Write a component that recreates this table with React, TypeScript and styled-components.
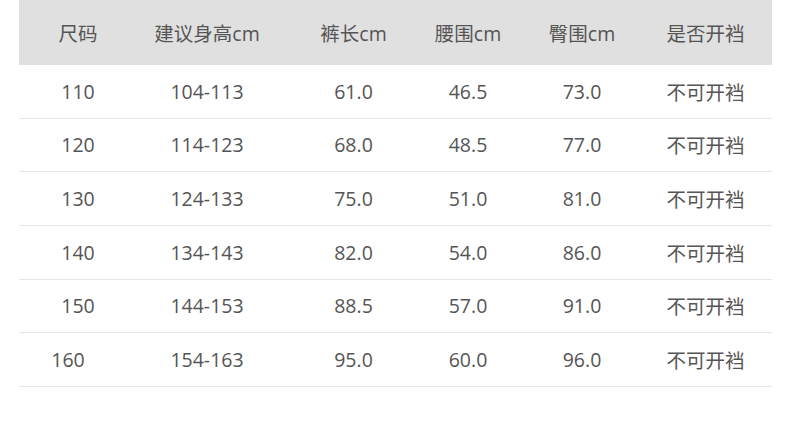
import React from "react";
import styled, { createGlobalStyle } from "styled-components";

const Global = createGlobalStyle`
  html, body { margin: 0; padding: 0; background: #ffffff; }
  body { font-family: "Open Sans", "Noto Sans CJK SC", sans-serif; }
`;

const Page = styled.div`
  width: 790px;
  height: 431px;
  padding: 0 18px 0 19px;
  box-sizing: border-box;
  background: #fff;
`;

const Grid = styled.div`
  display: grid;
  grid-template-columns: 118px 140px 153px 76px 152px 114px;
  width: 753px;
`;

const HeadCell = styled.div<{ $last?: boolean }>`
  height: 65px;
  background: #e0e0e0;
  display: flex;
  align-items: center;
  justify-content: center;
  padding-right: ${(p) => (p.$last ? "19px" : "0")};
  font-size: 19.5px;
  color: #555;
  white-space: nowrap;
  box-sizing: border-box;
`;

const Cell = styled.div<{ $last?: boolean }>`
  height: 53.67px;
  border-bottom: 1px solid #e6e6e6;
  display: flex;
  align-items: center;
  justify-content: center;
  padding-right: ${(p) => (p.$last ? "19px" : "0")};
  font-size: 19.5px;
  color: #555;
  white-space: nowrap;
  box-sizing: border-box;
`;

const Text = styled.span<{ $shift?: number }>`
  position: relative;
  left: ${(p) => p.$shift ?? 0}px;
`;

const headers = ["尺码", "建议身高cm", "裤长cm", "腰围cm", "臀围cm", "是否开裆"];

const rows = [
  ["110", "104-113", "61.0", "46.5", "73.0", "不可开裆"],
  ["120", "114-123", "68.0", "48.5", "77.0", "不可开裆"],
  ["130", "124-133", "75.0", "51.0", "81.0", "不可开裆"],
  ["140", "134-143", "82.0", "54.0", "86.0", "不可开裆"],
  ["150", "144-153", "88.5", "57.0", "91.0", "不可开裆"],
  ["160", "154-163", "95.0", "60.0", "96.0", "不可开裆"],
];

export default function App() {
  return (
    <Page>
      <Global />
      <Grid>
        {headers.map((h, i) => (
          <HeadCell key={h} $last={i === 5}>
            {h}
          </HeadCell>
        ))}
        {rows.map((r, ri) =>
          r.map((c, ci) => (
            <Cell key={`${ri}-${ci}`} $last={ci === 5}>
              <Text $shift={ri === 5 && ci === 0 ? -10 : 0}>{c}</Text>
            </Cell>
          ))
        )}
      </Grid>
    </Page>
  );
}
